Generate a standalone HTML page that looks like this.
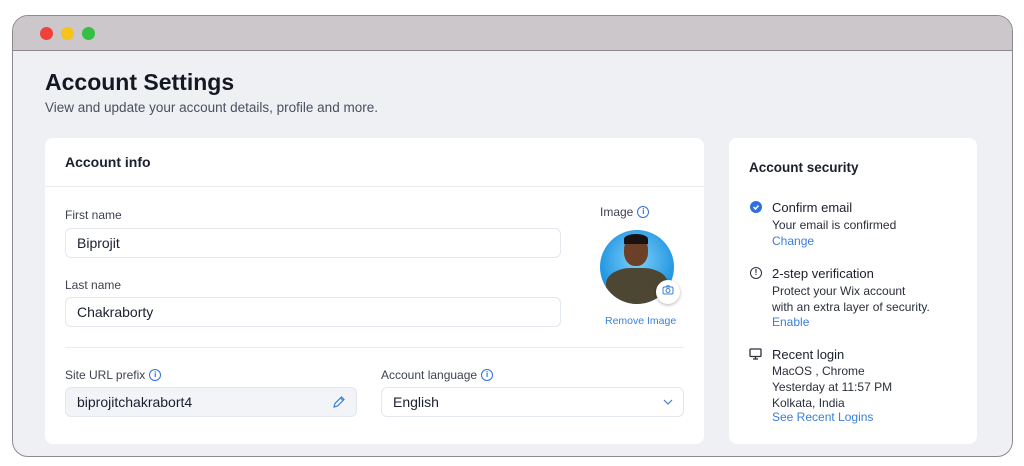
<!DOCTYPE html>
<html><head><style>
*{margin:0;padding:0;box-sizing:border-box}
body{width:1024px;height:466px;background:#fff;font-family:"Liberation Sans",sans-serif;position:relative;overflow:hidden;color:#1b1f2e}
.win{position:absolute;left:12px;top:15px;width:1001px;height:442px;border:1px solid #8c8a8e;border-radius:16px;background:#eef0f4;overflow:hidden}
.bar{position:absolute;left:0;top:0;right:0;height:35px;background:#cbc7cb;border-bottom:1px solid #8c8a8e}
.dot{position:absolute;top:11px;width:13px;height:13px;border-radius:50%}
.a{position:absolute;white-space:nowrap}
.card{position:absolute;background:#fff;border-radius:8px}
.lbl{font-size:12px;color:#3d4252}
.inp{position:absolute;border:1px solid #e3e7ee;border-radius:6px;background:#fff;font-size:14px;padding-left:11px;line-height:28px;color:#1b1f2e}
.info{display:inline-block;width:12px;height:12px;border:1.3px solid #2f6fe0;border-radius:50%;color:#2f6fe0;font-size:8px;line-height:9px;text-align:center;font-weight:bold;vertical-align:top;margin-top:1px;margin-left:4px}
.link{color:#3a7fd9;font-size:12px}
.sec{font-size:12px;color:#2b2f3c;line-height:16px}
.st{font-size:13px;color:#1b1f2e}
</style></head><body>
<div class="win">
<div class="bar"><div class="dot" style="left:27px;background:#f0423b"></div><div class="dot" style="left:48px;background:#f6c21c"></div><div class="dot" style="left:69px;background:#35c043"></div></div>
</div>
<div class="a" style="left:45px;top:69px;font-size:23px;font-weight:bold;color:#151823">Account Settings</div>
<div class="a" style="left:45px;top:100px;font-size:13.5px;color:#4a4f5e">View and update your account details, profile and more.</div>

<div class="card" style="left:45px;top:138px;width:659px;height:306px">
<div class="a" style="left:20px;top:16px;font-size:14px;font-weight:bold">Account info</div>
<div style="position:absolute;left:0;right:0;top:48px;border-top:1px solid #e8ebf0"></div>
<div class="a lbl" style="left:20px;top:70px">First name</div>
<div class="inp" style="left:20px;top:90px;width:496px;height:30px">Biprojit</div>
<div class="a lbl" style="left:20px;top:140px">Last name</div>
<div class="inp" style="left:20px;top:159px;width:496px;height:30px">Chakraborty</div>
<div style="position:absolute;left:20px;right:20px;top:209px;border-top:1px solid #e8ebf0"></div>
<div class="a lbl" style="left:20px;top:230px">Site URL prefix<span class="info">i</span></div>
<div class="inp" style="left:20px;top:249px;width:292px;height:30px;background:#f2f4f7">biprojitchakrabort4
<svg style="position:absolute;right:10px;top:7px" width="14" height="14" viewBox="0 0 14 14"><path d="M2 12l1-3.5L9.5 2l2.5 2.5L5.5 11z M8.5 3l2.5 2.5" fill="none" stroke="#3a7fd9" stroke-width="1.2"/></svg></div>
<div class="a lbl" style="left:336px;top:230px">Account language<span class="info">i</span></div>
<div class="inp" style="left:336px;top:249px;width:303px;height:30px">English
<svg style="position:absolute;right:10px;top:11px" width="10" height="6" viewBox="0 0 10 6"><path d="M1 1l4 4 4-4" fill="none" stroke="#3a7fd9" stroke-width="1.2"/></svg></div>
<div class="a lbl" style="left:555px;top:67px">Image<span class="info">i</span></div>
<div style="position:absolute;left:555px;top:92px;width:74px;height:74px;border-radius:50%;background:radial-gradient(circle at 50% 40%,#7fd0fa,#1d93e0 70%);overflow:hidden">
<div style="position:absolute;left:24px;top:6px;width:24px;height:30px;border-radius:45%;background:#6b3f28"></div>
<div style="position:absolute;left:24px;top:4px;width:24px;height:10px;border-radius:50% 50% 0 0;background:#1a1210"></div>
<div style="position:absolute;left:6px;top:38px;width:62px;height:40px;border-radius:40% 40% 0 0;background:#4c4632"></div>
</div>
<div style="position:absolute;left:611px;top:142px;width:24px;height:24px;border-radius:50%;background:#fff;box-shadow:0 1px 3px rgba(0,0,0,.3);text-align:center;line-height:22px;color:#3a7fd9;font-size:11px">
<svg width="12" height="10" viewBox="0 0 12 10" style="vertical-align:-1px"><rect x="1" y="2" width="10" height="7" rx="1.5" fill="none" stroke="#3a7fd9"/><circle cx="6" cy="5.5" r="2" fill="none" stroke="#3a7fd9"/><path d="M4 2l1-1.2h2L8 2" fill="none" stroke="#3a7fd9"/></svg></div>
<div class="a link" style="left:560px;top:177px;font-size:10.5px">Remove Image</div>
</div>

<div class="card" style="left:729px;top:138px;width:248px;height:306px">
<div class="a" style="left:20px;top:22px;font-size:13.5px;font-weight:bold">Account security</div>
<div style="position:absolute;left:21px;top:63px;width:12px;height:12px;border-radius:50%;background:#2f6fe0"><svg width="12" height="12" viewBox="0 0 12 12" style="position:absolute;left:0;top:0"><path d="M3.5 6l2 2 3-3.5" fill="none" stroke="#fff" stroke-width="1.5"/></svg></div>
<div class="a st" style="left:43px;top:62px">Confirm email</div>
<div class="a sec" style="left:43px;top:79px">Your email is confirmed</div>
<div class="a link" style="left:43px;top:96px">Change</div>
<div style="position:absolute;left:21px;top:129px;width:12px;height:12px;border-radius:50%;border:1.4px solid #2b2f3c;font-size:8px;line-height:9px;text-align:center;font-weight:bold">!</div>
<div class="a st" style="left:43px;top:128px">2-step verification</div>
<div class="a sec" style="left:43px;top:145px">Protect your Wix account<br>with an extra layer of security.</div>
<div class="a link" style="left:43px;top:177px">Enable</div>
<svg style="position:absolute;left:20px;top:210px" width="13" height="12" viewBox="0 0 13 12"><rect x="1" y="1" width="11" height="7.5" rx="1" fill="none" stroke="#2b2f3c" stroke-width="1.3"/><path d="M4 11h5M6.5 8.5v2.5" stroke="#2b2f3c" stroke-width="1.3"/></svg>
<div class="a st" style="left:43px;top:209px">Recent login</div>
<div class="a sec" style="left:43px;top:225px">MacOS , Chrome<br>Yesterday at 11:57 PM<br>Kolkata, India</div>
<div class="a link" style="left:43px;top:272px">See Recent Logins</div>
</div>
</body></html>
